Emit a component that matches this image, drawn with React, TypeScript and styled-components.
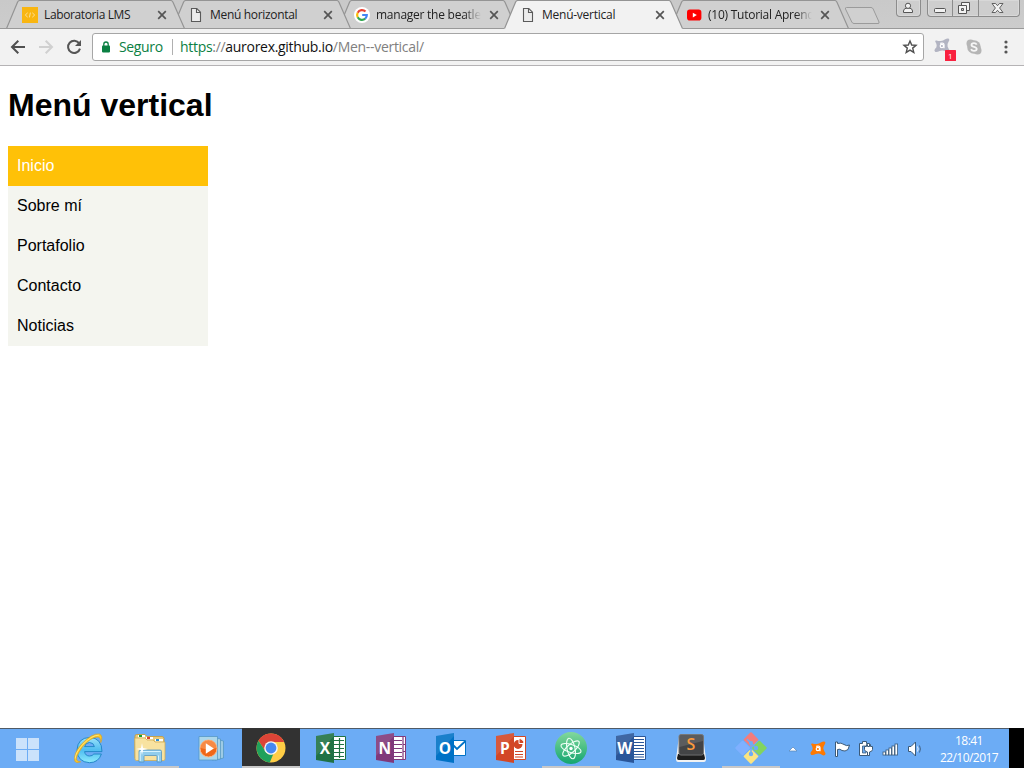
import React from "react";
import styled, { createGlobalStyle } from "styled-components";

const GlobalStyle = createGlobalStyle`
  * { box-sizing: border-box; }
  body { margin: 0; background: #fff; overflow: hidden; }
  svg { display: block; flex: none; }
`;

const uiFont = `"Open Sans", "Noto Sans", sans-serif`;

const Screen = styled.div`
  display: flex;
  flex-direction: column;
  width: 1024px;
  height: 768px;
  overflow: hidden;
  font-family: ${uiFont};
`;

/* ---------- tab strip ---------- */

const TabStrip = styled.header`
  display: flex;
  height: 29px;
  padding-left: 6px;
  background: linear-gradient(#c9c9c9, #cccccc);
  box-shadow: inset 0 -1px #999;
  flex: none;
`;

const TabBox = styled.div<{ $order: number }>`
  display: grid;
  width: 179px;
  height: 29px;
  margin-right: -13px;
  position: relative;
  z-index: ${(p) => p.$order};
  flex: none;
  > * { grid-area: 1 / 1; }
  &:nth-child(5) { width: 178px; }
`;

const TabContent = styled.div`
  display: flex;
  align-items: center;
  height: 29px;
  padding: 1px 0 0 16px;
`;

const TabTitle = styled.span<{ $spacing: number; $fade?: boolean; $width?: number }>`
  width: ${(p) => p.$width ?? 105}px;
  margin: 0 8px 0 6px;
  overflow: hidden;
  white-space: nowrap;
  font-size: 12px;
  line-height: 18px;
  color: #222;
  letter-spacing: ${(p) => p.$spacing}px;
  ${(p) => p.$fade && "-webkit-mask-image: linear-gradient(90deg, #000 84%, transparent);"}
`;

const NewTab = styled.div`
  padding: 6px 0 0 8px;
`;

const WindowControls = styled.div`
  display: flex;
  gap: 6px;
  margin-left: auto;
  padding-right: 4px;
`;

const ControlGroup = styled.div`
  display: flex;
  height: 17px;
  border: 1px solid #8c8c8c;
  border-top: 0;
  border-radius: 0 0 4px 4px;
  background: #cecece;
  box-shadow: inset 0 0 0 1px #d8d8d8;
`;

const Control = styled.div<{ $width: number }>`
  display: flex;
  justify-content: center;
  width: ${(p) => p.$width}px;
  padding-right: 1px;
  & + & { border-left: 1px solid #8c8c8c; padding-right: 3px; }
`;

/* ---------- toolbar ---------- */

const Toolbar = styled.div`
  display: flex;
  align-items: center;
  height: 37px;
  padding-left: 10px;
  background: #f2f2f2;
  border-bottom: 1px solid #b5b3b5;
  flex: none;
`;

const NavButtons = styled.div`
  display: flex;
  gap: 12px;
  width: 82px;
`;

const AddressBar = styled.div`
  display: flex;
  align-items: center;
  width: 832px;
  height: 28px;
  padding: 0 5px 0 8px;
  background: #fff;
  border: 1px solid #a6a6a6;
  border-radius: 3px;
  font-size: 14px;
  line-height: 20px;
`;

const Secure = styled.span`
  width: 54px;
  height: 16px;
  margin-left: 8px;
  border-right: 1px solid #b0b0b0;
  line-height: 15px;
  color: #0b8043;
  letter-spacing: -0.35px;
`;

const Url = styled.span`
  margin: 0 auto 0 7px;
  color: #808080;
  letter-spacing: -0.3px;
  line-height: 18px;
  b { font-weight: 400; color: #0b8043; }
  em { font-style: normal; color: #111; }
`;

const Extensions = styled.div`
  display: flex;
  align-items: center;
  padding-left: 9px;
  gap: 10px;
`;

const MoreButton = styled.div`
  padding-left: 12px;
`;

/* ---------- web page ---------- */

const Page = styled.main`
  flex: 1;
  padding: 0 8px;
  background: #fff;
  color: #000;
  font-family: "Liberation Sans", Arial, sans-serif;
`;

const Heading = styled.h1`
  margin: 21px 0 22px;
  font-size: 32px;
  line-height: 37px;
`;

const Menu = styled.ul`
  width: 200px;
  margin: 0;
  padding: 0;
  list-style: none;
  background: #f4f5ef;
`;

const MenuItem = styled.li<{ $active?: boolean }>`
  padding: 0 9px;
  font-size: 16px;
  line-height: 39px;
  height: 40px;
  color: ${(p) => (p.$active ? "#fff" : "#000")};
  background: ${(p) => (p.$active ? "#ffc107" : "transparent")};
`;

/* ---------- taskbar ---------- */

const Taskbar = styled.footer`
  display: flex;
  height: 40px;
  background: #6cacf5;
  box-shadow: inset 0 1px #4f5a66;
  flex: none;
`;

const TaskSlot = styled.div<{ $width?: number; $running?: boolean; $focused?: boolean }>`
  display: flex;
  align-items: center;
  justify-content: center;
  width: ${(p) => p.$width ?? 58}px;
  margin-right: 2px;
  padding-top: ${(p) => (p.$running ? 2 : 0)}px;
  border-bottom: ${(p) => (p.$running ? "2px solid #c8c8c8" : "0")};
  background: ${(p) => (p.$focused ? "#323232" : "transparent")};
  flex: none;
`;

const StartSlot = styled(TaskSlot)`
  padding-top: 3px;
`;

const Tray = styled.div`
  display: flex;
  align-items: center;
  gap: 8px;
  padding: 2px 0 0 6px;
  width: 147px;
  flex: none;
  > :first-child { margin-right: 4px; }
`;

const Clock = styled.div`
  width: 80px;
  padding-top: 4px;
  text-align: center;
  color: #fff;
  font-size: 12px;
  line-height: 17px;
  letter-spacing: -0.55px;
  flex: none;
`;

const DesktopPeek = styled.div`
  width: 15px;
  margin-left: auto;
  background: #000;
`;

/* ---------- small drawings ---------- */

const TabShape = ({ active }: { active?: boolean }) => (
  <svg width="179" height="29" viewBox="0 0 179 29">
    <path
      d={`M0 ${active ? 29 : 28.5}L1 27.5L11.5 2.2Q12.2 .5 14 .5H164.5Q166.2 .5 167 2.2L177.5 27Q178 28.5 179 ${active ? 29 : 28.5}Z`}
      fill={active ? "#f2f2f2" : "#d0d0d0"}
    />
    <path
      d="M.5 28.5L11.5 2.2Q12.2 .5 14 .5H164.5Q166.2 .5 167 2.2L178.5 28.5"
      fill="none"
      stroke="#949494"
      strokeWidth="1.2"
    />
    {!active && <path d="M0 28.5H179" stroke="#999" />}
  </svg>
);

const CloseIcon = () => (
  <svg width="10" height="10" viewBox="0 0 10 10">
    <path d="M1.2 1.2L8.8 8.8M8.8 1.2L1.2 8.8" stroke="#555" strokeWidth="1.7" />
  </svg>
);

const CodeFavicon = () => (
  <svg width="16" height="16" viewBox="0 0 16 16">
    <path d="M0 0H16V16H0Z" fill="#f9b612" />
    <path d="M5.7 5.8L3.3 8L5.7 10.2M7.4 10.4L8.4 5.6M10.3 5.8L12.7 8L10.3 10.2" stroke="#fde09a" fill="none" />
  </svg>
);

const FileFavicon = () => (
  <svg width="16" height="16" viewBox="0 0 16 16">
    <path d="M3.5 1.5H8.8L12.5 5.2V14.5H3.5Z" fill="#ececec" stroke="#5a5a5a" strokeWidth="1.1" />
    <path d="M8.5 1.8V5.5H12.2" fill="none" stroke="#5a5a5a" strokeWidth="1.1" />
  </svg>
);

const GoogleFavicon = () => (
  <svg width="16" height="16" viewBox="0 0 16 16">
    <circle cx="8" cy="8" r="8" fill="#fff" />
    <g fill="none" strokeWidth="2.2">
      <path d="M11.5 4.6A4.9 4.9 0 0 0 3.7 5.7" stroke="#ea4335" />
      <path d="M3.7 5.7A4.9 4.9 0 0 0 3.7 10.3" stroke="#fbbc05" />
      <path d="M3.7 10.3A4.9 4.9 0 0 0 11.2 11.7" stroke="#34a853" />
      <path d="M11.2 11.7A4.9 4.9 0 0 0 12.8 8H8.2" stroke="#4285f4" />
    </g>
  </svg>
);

const YoutubeFavicon = () => (
  <svg width="16" height="16" viewBox="0 0 16 16">
    <rect x="1" y="2.6" width="14.4" height="11" rx="2.8" fill="#f00" />
    <path d="M6.8 5.7L10.8 8.1L6.8 10.5Z" fill="#fff" />
  </svg>
);

const splat =
  "M1.2 3.6Q.9 2.2 2.6 2.4Q4.6 3.2 6.4 3Q9 3.2 10.8 1.6Q13.4 -.2 15 .8Q16 1.9 14.3 4.2Q12.8 6.4 13.6 8.6Q14.2 10.2 15.4 11.9Q16 14.4 13.6 14.4Q12.2 13.9 10.8 12.9Q8.4 11.9 5.6 12.9Q3.6 14.2 1.4 13.9Q-.3 12.7 .9 10.9Q2.8 9.4 2.7 7.4Q2.6 5.5 1.2 3.6Z";

const AvastIcon = () => (
  <svg width="16" height="16" viewBox="0 0 16 16">
    <path d={splat} fill="#ff7900" />
    <circle cx="7.9" cy="8" r="1.7" fill="none" stroke="#fff" strokeWidth="1.2" />
    <path d="M6.2 5.4Q10 4.4 10 6.8V10.3" fill="none" stroke="#fff" strokeWidth="1.2" />
  </svg>
);

const AvastBadge = () => (
  <svg width="23" height="30" viewBox="0 0 23 30">
    <g transform="translate(1 6)">
      <path d={splat} fill="#b2b4c2" />
      <circle cx="7.9" cy="8" r="1.7" fill="none" stroke="#fff" strokeWidth="1.2" />
      <path d="M6.2 5.4Q10 4.4 10 6.8V10.3" fill="none" stroke="#fff" strokeWidth="1.2" />
    </g>
    <rect x="12" y="18" width="11" height="11" rx=".6" fill="#f9213f" />
    <text x="17.4" y="27" fontSize="8" fill="#fff" textAnchor="middle" fontFamily="Open Sans">1</text>
  </svg>
);

const SkypeIcon = () => (
  <svg width="16" height="16" viewBox="0 0 16 16">
    <circle cx="8" cy="8" r="6.8" fill="#b5b5b5" />
    <circle cx="4.5" cy="4.5" r="4" fill="#b5b5b5" />
    <circle cx="11.5" cy="11.5" r="4" fill="#b5b5b5" />
    <path d="M10.7 5.7Q10 4.2 8 4.2Q5.5 4.2 5.5 6Q5.5 7.4 8 7.9Q10.7 8.5 10.7 10Q10.6 11.9 8 11.9Q5.7 11.9 5.1 10.1" fill="none" stroke="#f6f6f6" strokeWidth="1.8" />
  </svg>
);

const ArrowIcon = ({ color, flip }: { color: string; flip?: boolean }) => (
  <svg width="16" height="16" viewBox="0 0 16 16">
    <path transform={flip ? "matrix(-1 0 0 1 16 0)" : undefined} d="M15 8H2.5M8.3 1.7L2 8L8.3 14.3" fill="none" stroke={color} strokeWidth="2" />
  </svg>
);

const ReloadIcon = () => (
  <svg width="16" height="16" viewBox="0 0 16 16">
    <path d="M13.2 4.4A6.1 6.1 0 1 0 14 9.6" fill="none" stroke="#555" strokeWidth="2" />
    <path d="M15 1V7H9Z" fill="#555" />
  </svg>
);

const LockIcon = () => (
  <svg width="10" height="12" viewBox="0 0 10 12">
    <rect x="1" y="4.6" width="8" height="6.8" rx=".8" fill="#0b8043" />
    <path d="M2.8 5V3.2A2.2 2.2 0 0 1 7.2 3.2V5" fill="none" stroke="#0b8043" strokeWidth="1.3" />
  </svg>
);

const StarIcon = () => (
  <svg width="16" height="16" viewBox="0 0 16 16">
    <path d="M8 2L9.7 6L14 6.3L10.7 9.1L11.8 13.4L8 11.1L4.2 13.4L5.3 9.1L2 6.3L6.3 6Z" fill="none" stroke="#505050" strokeWidth="1.4" />
  </svg>
);

const DotsIcon = () => (
  <svg width="4" height="16" viewBox="0 0 4 16">
    {[3, 8, 13].map((y) => <circle key={y} cx="2" cy={y} r="1.6" fill="#555" />)}
  </svg>
);

const Office = ({ letter, color, children }: { letter: string; color: string; children: React.ReactNode }) => (
  <svg width="32" height="32" viewBox="0 0 32 32">
    {children}
    <path d="M1 4L19 1V31L1 28Z" fill={color} />
    <path d="M1 4L19 1V4L1 24Z" fill="#fff" opacity=".1" />
    <text x="9.8" y="21.5" fontSize="15.5" fontWeight="700" fill="#fff" textAnchor="middle" fontFamily="Open Sans">{letter}</text>
  </svg>
);

const WindowsLogo = () => (
  <svg width="24" height="24" viewBox="0 0 24 24">
    <path d="M0 0H11V11H0ZM12 0H23V11H12ZM0 12H11V23H0ZM12 12H23V23H12Z" fill="#cbe2fb" />
  </svg>
);

const ExplorerBrowser = () => (
  <svg width="32" height="32" viewBox="0 0 32 32">
    <defs>
      <linearGradient id="ie" x1="0" y1="0" x2="0" y2="1">
        <stop offset="0" stopColor="#9be2fa" /><stop offset=".5" stopColor="#4fbdf0" /><stop offset="1" stopColor="#8beafd" />
      </linearGradient>
    </defs>
    <path
      d="M30 19.6H12.6Q13.2 24 17.6 24Q20.4 24 21.8 22H29.4Q26.6 30.6 17.4 30.7Q5.4 30 5 18Q5.6 6 17.6 5.4Q30 6 30 19.6ZM12.6 14.6H22.4Q21.6 10.6 17.4 10.5Q13.4 10.7 12.6 14.6Z"
      fill="url(#ie)"
      stroke="#1c82c4"
      strokeWidth=".9"
    />
    <path d="M8.6 29.8Q4.2 31.6 2.8 29Q.8 22.4 9.6 12Q20.4 .8 27.4 2Q31.4 3.6 28.8 10.6Q29 4.8 25.2 5Q18.6 5.4 10.2 15.2Q2.8 25.6 4.8 28.2Q6 29.8 8.6 29.8Z" fill="#fbc829" stroke="#dca31f" strokeWidth=".7" />
    <path d="M3.2 26.6Q3.2 21 11 12.2Q20.6 2.8 26.8 3.2" fill="none" stroke="#ffeb8d" strokeWidth=".8" />
  </svg>
);

const FolderIcon = () => (
  <svg width="34" height="32" viewBox="0 0 34 32">
    <path d="M2 4Q2 2.5 3.5 2.5H12L14 4.5H29Q31 4.5 31 6.5V26H2Z" fill="#e9cb7d" stroke="#c89b35" strokeWidth=".8" />
    <path d="M5 3H12V5.5H5ZM13 5H20V7.5H13ZM22 7H30V9.5H22Z" fill="#fff" />
    <path d="M6 3H9V5H6Z" fill="#14a02c" /><path d="M14 5H17V7H14Z" fill="#d9402e" /><path d="M23 7H26V9H23Z" fill="#2b8fd6" />
    <path d="M1.8 6H12L14 8H20L22 10H32V27Q32 28.5 30.5 28.5H3.5Q2 28.5 2 27Z" fill="#f8e2a0" stroke="#d2ad54" strokeWidth=".8" />
    <path d="M6 19.5Q6 18 7.5 18H27Q28.5 18 28.5 19.5V30H24V24.5Q24 23.5 23 23.5H12Q11 23.5 11 24.5V30H6Z" fill="#91cdec" stroke="#5796bf" strokeWidth=".8" />
    <path d="M7 19.5H27.5M7.2 20V29M25.5 23.5V29" stroke="#d7f4ff" fill="none" />
    <path d="M9 11L10 16L15 17L10 18L9 23L8 18L3 17L8 16Z" fill="#fff" />
  </svg>
);

const MediaPlayer = () => (
  <svg width="32" height="32" viewBox="0 0 32 32">
    <path d="M20 7L28.5 9V26L20 28Z" fill="#9ecbe4" stroke="#5094be" strokeWidth=".7" />
    <path d="M17 5.5L25.5 7V27L17 28Z" fill="#a9d3e8" stroke="#5094be" strokeWidth=".7" />
    <path d="M4 4.5H22.5V28H4Z" fill="#acd7eb" stroke="#5094be" strokeWidth=".7" />
    <circle cx="13.5" cy="16.5" r="8.5" fill="#f06718" stroke="#fbb98a" />
    <path d="M5.5 16A8 8 0 0 1 21.5 16Q14 18.5 5.5 16Z" fill="#f99a58" opacity=".7" />
    <path d="M10.8 11.2L18.8 16.5L10.8 21.8Z" fill="#fff" />
  </svg>
);

const ChromeIcon = () => (
  <svg width="30" height="30" viewBox="0 0 30 30">
    <circle cx="15" cy="15" r="14.5" fill="#ffcd45" />
    <path d="M2.5 7.7A14.5 14.5 0 0 1 28.2 9H15A6.5 6.5 0 0 0 9.4 18.2Z" fill="#dc4437" />
    <path d="M2.5 7.7L9.4 18.2A6.5 6.5 0 0 0 17.3 21L13.8 29.4A14.5 14.5 0 0 1 2.5 7.7Z" fill="#20a15c" />
    <circle cx="15" cy="15" r="6.8" fill="#f3f4f5" />
    <circle cx="15" cy="15" r="5.4" fill="#4688f1" />
  </svg>
);

const AtomIcon = () => (
  <svg width="32" height="32" viewBox="0 0 32 32">
    <defs><linearGradient id="atom" x1="0" y1="0" x2="0" y2="1"><stop stopColor="#82d89c" /><stop offset="1" stopColor="#13a56f" /></linearGradient></defs>
    <circle cx="16" cy="16" r="16" fill="url(#atom)" />
    <g fill="none" stroke="#effff5" strokeWidth="1.1">
      <ellipse cx="16" cy="16.5" rx="10.5" ry="4" transform="rotate(18 16 16.5)" />
      <ellipse cx="16" cy="16.5" rx="10.5" ry="4" transform="rotate(78 16 16.5)" />
      <ellipse cx="16" cy="16.5" rx="10.5" ry="4" transform="rotate(-42 16 16.5)" />
    </g>
    <circle cx="16" cy="16.5" r="1.7" fill="#fff" />
  </svg>
);

const SublimeIcon = () => (
  <svg width="32" height="30" viewBox="0 0 32 30">
    <path d="M4 3H28L31 26Q31 29 29 29H3Q1 29 1 26Z" fill="#f2f2f2" />
    <path d="M3 21H29L30 25Q30 27 28.5 27H3.5Q2 27 2 25Z" fill="#1d1d1d" />
    <rect x="4" y="1.5" width="24.5" height="20.5" rx="2" fill="#5b5c5e" stroke="#777" />
    <path d="M4.5 14L28 8V20Q28 21.5 26.5 21.5H6Q4.5 21.5 4.5 20Z" fill="#434446" />
    <text x="16" y="17" fontSize="16" fontWeight="600" fill="#fb9a3c" textAnchor="middle" fontFamily="Open Sans">S</text>
  </svg>
);

const GitIcon = () => (
  <svg width="32" height="32" viewBox="0 0 32 32">
    <g transform="rotate(45 16 16)">
      <rect x="4.6" y="4.6" width="10.9" height="10.9" rx="1" fill="#f47c7b" />
      <rect x="16.5" y="4.6" width="10.9" height="10.9" rx="1" fill="#82d45e" />
      <rect x="4.6" y="16.5" width="10.9" height="10.9" rx="1" fill="#7fb0ff" />
      <rect x="16.5" y="16.5" width="10.9" height="10.9" rx="1" fill="#fbe481" />
    </g>
    <path d="M12 7L16 11V22M16 11L21 16" fill="none" stroke="#6cacf5" strokeWidth="1.6" />
    <g fill="#6cacf5"><circle cx="16" cy="11" r="2" /><circle cx="21" cy="16" r="2.2" /><circle cx="16" cy="22" r="2.2" /></g>
  </svg>
);

const TrayFlag = () => (
  <svg width="16" height="18" viewBox="0 0 16 18">
    <path d="M1.5 2V16.5H3.5V9.5Q6 8.5 8 10.5Q11 12 14 9.5L15.5 5Q12.5 6.5 10 4.5Q7 2.3 3.5 3.5V2Z" fill="#fff" stroke="#3b5a79" />
  </svg>
);

const TrayPlug = () => (
  <svg width="16" height="18" viewBox="0 0 16 18">
    <path d="M1.5 3.5H4.5V1.5H8.5V3.5H11.5V15.5H1.5Z" fill="#fff" stroke="#3b5a79" />
    <path d="M4.5 6H8V13H4.5Z" fill="#6cacf5" stroke="#3b5a79" strokeWidth=".8" />
    <path d="M8.5 4.5V6.5H6.5V9.5Q6.5 11.5 9.5 12V15.5H11.5V12Q14.5 11.5 14.5 9.5V6.5H12.5V4.5H11.5V6.5H9.5V4.5Z" fill="#fff" stroke="#3b5a79" />
  </svg>
);

const TraySignal = () => (
  <svg width="17" height="14" viewBox="0 0 17 14">
    {[0, 1, 2, 3, 4].map((i) => (
      <rect key={i} x={1 + i * 3} y={10 - i * 2} width="2.6" height={3 + i * 2} fill="#fff" stroke="#3b5a79" strokeWidth=".8" />
    ))}
  </svg>
);

const TraySound = () => (
  <svg width="16" height="16" viewBox="0 0 16 16">
    <path d="M1.5 5.5H4L8.5 1V15L4 10.5H1.5Z" fill="#fff" stroke="#3b5a79" />
    <path d="M10.5 5.5Q11.8 8 10.5 10.5" fill="none" stroke="#e8f2fd" />
    <path d="M12.5 4.5Q14.3 8 12.5 11.5" fill="none" stroke="#3b5a79" strokeWidth=".9" />
  </svg>
);

const Sheet = ({ color, d }: { color: string; d: string }) => (
  <g>
    <path d="M18 4.5H30.5V27.5H18Z" fill="#fff" stroke={color} />
    <path d={d} stroke={color} fill="none" strokeWidth="1.2" />
  </g>
);

/* ---------- data ---------- */

const tabs = [
  { title: "Laboratoria LMS", icon: <CodeFavicon />, spacing: -0.38 },
  { title: "Menú horizontal", icon: <FileFavicon />, spacing: -0.32 },
  { title: "manager the beatles", icon: <GoogleFavicon />, spacing: -0.25, fade: true },
  { title: "Menú-vertical", icon: <FileFavicon />, spacing: -0.25, active: true },
  { title: "(10) Tutorial Aprende", icon: <YoutubeFavicon />, spacing: -0.25, fade: true, width: 104 },
];

const menu = ["Inicio", "Sobre mí", "Portafolio", "Contacto", "Noticias"];

export default function App() {
  return (
    <Screen>
      <GlobalStyle />
      <TabStrip>
        {tabs.map((t, i) => (
          <TabBox key={t.title} $order={t.active ? 10 : 5 - i}>
            <TabShape active={t.active} />
            <TabContent>
              {t.icon}
              <TabTitle $spacing={t.spacing} $fade={t.fade} $width={t.width}>{t.title}</TabTitle>
              <CloseIcon />
            </TabContent>
          </TabBox>
        ))}
        <NewTab>
          <svg width="38" height="20" viewBox="0 0 38 20">
            <path d="M3.5 1.5H28Q29.5 1.5 30.2 3L36 16Q36.5 17.5 35 17.5H11Q9.5 17.5 8.8 16L2.5 3Q2 1.5 3.5 1.5Z" fill="#d0d0d0" stroke="#9b9b9b" />
          </svg>
        </NewTab>
        <WindowControls>
          <ControlGroup>
            <Control $width={23}>
              <svg width="12" height="14" viewBox="0 0 12 14">
                <path d="M4 8.2H8Q10.5 9 10.5 11V12.5H1.5V11Q1.5 9 4 8.2Z" fill="#f2f2f2" stroke="#555" />
                <circle cx="6" cy="5.8" r="2.6" fill="#f2f2f2" stroke="#555" />
              </svg>
            </Control>
          </ControlGroup>
          <ControlGroup>
            <Control $width={24}>
              <svg width="14" height="16" viewBox="0 0 14 16"><rect x="1.5" y="8.5" width="11" height="4" rx="1" fill="#f2f2f2" stroke="#555" /></svg>
            </Control>
            <Control $width={26}>
              <svg width="14" height="16" viewBox="0 0 14 16">
                <path d="M4.5 2.5H12.5V10.5H4.5Z" fill="#f2f2f2" stroke="#555" />
                <path d="M1.5 5.5H9.5V13.5H1.5Z" fill="#f2f2f2" stroke="#555" />
                <path d="M4.5 8.5H6.5V10.5H4.5Z" fill="#ccc" stroke="#555" />
              </svg>
            </Control>
            <Control $width={41}>
              <svg width="13" height="16" viewBox="0 0 13 16">
                <path d="M1 3.5H4.5L6.5 5.7L8.5 3.5H12L8.6 8L12 12.5H8.5L6.5 10.3L4.5 12.5H1L4.4 8Z" fill="#f2f2f2" stroke="#555" strokeWidth=".9" />
              </svg>
            </Control>
          </ControlGroup>
        </WindowControls>
      </TabStrip>

      <Toolbar>
        <NavButtons>
          <ArrowIcon color="#505050" />
          <ArrowIcon color="#d0d0d0" flip />
          <ReloadIcon />
        </NavButtons>
        <AddressBar>
          <LockIcon />
          <Secure>Seguro</Secure>
          <Url><b>https</b>://<em>aurorex.github.io</em>/Men--vertical/</Url>
          <StarIcon />
        </AddressBar>
        <Extensions>
          <AvastBadge />
          <SkypeIcon />
          <MoreButton><DotsIcon /></MoreButton>
        </Extensions>
      </Toolbar>

      <Page>
        <Heading>Menú vertical</Heading>
        <Menu>
          {menu.map((m, i) => <MenuItem key={m} $active={i === 0}>{m}</MenuItem>)}
        </Menu>
      </Page>

      <Taskbar>
        <StartSlot $width={56}><WindowsLogo /></StartSlot>
        <TaskSlot $width={60}><ExplorerBrowser /></TaskSlot>
        <TaskSlot $running $width={59}><FolderIcon /></TaskSlot>
        <TaskSlot $width={59}><MediaPlayer /></TaskSlot>
        <TaskSlot $running $focused><ChromeIcon /></TaskSlot>
        <TaskSlot>
          <Office letter="X" color="#207245">
            <Sheet color="#207245" d="M19 8.5H29M19 12.5H29M19 16.5H29M19 20.5H29M19 24.5H29M24.5 6V26" />
          </Office>
        </TaskSlot>
        <TaskSlot>
          <Office letter="N" color="#80397b">
            <Sheet color="#80397b" d="M19 8.5H27M19 12.5H27M19 16.5H27M19 20.5H27M19 24.5H27M28 5V27M28 12.5H31M28 19.5H31" />
          </Office>
        </TaskSlot>
        <TaskSlot>
          <Office letter="O" color="#0072c6">
            <path d="M18 8.5H30.5V23.5H18Z" fill="#fff" stroke="#0072c6" />
            <path d="M18 13L22 17L30.5 9" fill="none" stroke="#0072c6" strokeWidth="1.8" />
          </Office>
        </TaskSlot>
        <TaskSlot>
          <Office letter="P" color="#d24726">
            <Sheet color="#d24726" d="M20 19.5H28M20 22.5H28M20 25H28" />
            <circle cx="23" cy="12.5" r="4.4" fill="#d24726" />
            <path d="M24 11.5V6.5A5 5 0 0 1 29 11.5Z" fill="#d24726" stroke="#fff" />
          </Office>
        </TaskSlot>
        <TaskSlot $running><AtomIcon /></TaskSlot>
        <TaskSlot>
          <Office letter="W" color="#2a5699">
            <Sheet color="#2a5699" d="M19 7.5H29M19 10.5H29M19 13.5H29M19 16.5H29M19 19.5H29M19 22.5H29M19 25H29" />
          </Office>
        </TaskSlot>
        <TaskSlot><SublimeIcon /></TaskSlot>
        <TaskSlot $running><GitIcon /></TaskSlot>
        <Tray>
          <svg width="10" height="8" viewBox="0 0 10 8"><path d="M1 6L5 2L9 6Z" fill="#fff" stroke="#5784b4" strokeWidth=".7" /></svg>
          <AvastIcon />
          <TrayFlag />
          <TrayPlug />
          <TraySignal />
          <TraySound />
        </Tray>
        <Clock>18:41<br />22/10/2017</Clock>
        <DesktopPeek />
      </Taskbar>
    </Screen>
  );
}
